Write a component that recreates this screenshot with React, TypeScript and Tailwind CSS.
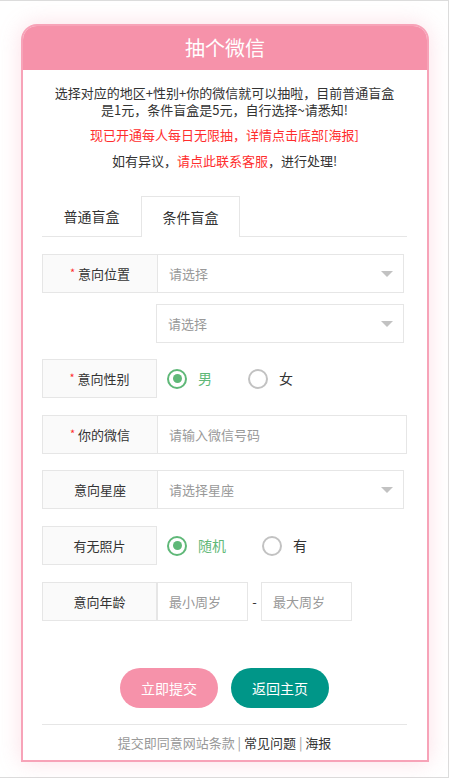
import React from "react";

const font = { fontFamily: '"Noto Sans CJK SC", "Noto Sans", sans-serif' };

function Label({ text, required, full }: { text: string; required?: boolean; full?: boolean }) {
  return (
    <div
      className={`w-[115px] h-[39px] shrink-0 flex items-center justify-center bg-[#fafafa] border border-[#e6e6e6] text-[13px] text-[#333] ${full ? "" : "border-r-0"}`}
    >
      {required && <span className="text-[#ff2d2d] text-[11px] mr-[3px] -mt-[3px]">*</span>}
      <span>{text}</span>
    </div>
  );
}

function Select({ text, width }: { text: string; width: string }) {
  return (
    <div className={`${width} h-[39px] border border-[#e6e6e6] bg-white flex items-center justify-between pl-[11px] pr-[10px] text-[13px] text-[#999]`}>
      <span>{text}</span>
      <span className="w-0 h-0 border-t-[6px] border-t-[#c2c2c2] border-x-[6px] border-x-transparent" />
    </div>
  );
}

function Radio({ text, checked }: { text: string; checked?: boolean }) {
  return (
    <div className="flex items-center mr-[36px]">
      <span
        className={`w-[20px] h-[20px] rounded-full border-[2px] flex items-center justify-center ${checked ? "border-[#5fb878]" : "border-[#c2c2c2]"}`}
      >
        {checked && <span className="w-[9px] h-[9px] rounded-full bg-[#5fb878]" />}
      </span>
      <span className={`ml-[11px] text-[14px] ${checked ? "text-[#5fb878]" : "text-[#333]"}`}>{text}</span>
    </div>
  );
}

export default function App() {
  return (
    <div style={font} className="w-[449px] h-[778px] border-t border-r border-b border-[#dcdcdc] bg-white pl-[21px] pt-[23px]">
      <div className="w-[408px] h-[738px] border-2 border-[#f7a3b8] rounded-t-[16px] bg-white shadow-[0_0_22px_rgba(245,140,166,0.28)] flex flex-col">
        <div className="h-[44px] bg-[#f692aa] rounded-t-[14px] flex items-center justify-center text-white text-[20px]">
          抽个微信
        </div>
        <div className="pl-[19px] pr-[20px] flex flex-col flex-1">
          <div className="pt-[14px] text-[13px] leading-[17px] text-[#333] text-center">
            <p className="w-[347px] mx-auto">选择对应的地区+性别+你的微信就可以抽啦，目前普通盲盒是1元，条件盲盒是5元，自行选择~请悉知!</p>
            <p className="mt-[8px] text-[#ff2d2d]">现已开通每人每日无限抽，详情点击底部[海报]</p>
            <p className="mt-[9px]">
              如有异议，<span className="text-[#ff2d2d]">请点此联系客服</span>，进行处理!
            </p>
          </div>

          <div className="mt-[27px] flex border-b border-[#e6e6e6] h-[41px]">
            <div className="w-[99px] h-[40px] flex items-center justify-center text-[14px] text-[#333]">普通盲盒</div>
            <div className="w-[99px] h-[41px] flex items-center justify-center text-[14px] text-[#333] bg-white border border-b-0 border-[#e6e6e6] -mb-px">
              条件盲盒
            </div>
          </div>

          <div className="mt-[17px] flex">
            <Label text="意向位置" required />
            <Select text="请选择" width="w-[247px]" />
          </div>
          <div className="mt-[11px] flex pl-[114px]">
            <Select text="请选择" width="w-[248px]" />
          </div>

          <div className="mt-[16px] flex items-center">
            <Label text="意向性别" required full />
            <div className="flex items-center pl-[10px]">
              <Radio text="男" checked />
              <Radio text="女" />
            </div>
          </div>

          <div className="mt-[17px] flex">
            <Label text="你的微信" required />
            <div className="w-[250px] h-[39px] border border-[#e6e6e6] flex items-center pl-[11px] text-[13px] text-[#999]">
              请输入微信号码
            </div>
          </div>

          <div className="mt-[16px] flex">
            <Label text="意向星座" />
            <Select text="请选择星座" width="w-[247px]" />
          </div>

          <div className="mt-[17px] flex items-center">
            <Label text="有无照片" full />
            <div className="flex items-center pl-[10px]">
              <Radio text="随机" checked />
              <Radio text="有" />
            </div>
          </div>

          <div className="mt-[17px] flex items-center">
            <Label text="意向年龄" full />
            <div className="w-[91px] h-[39px] border border-[#e6e6e6] flex items-center pl-[11px] text-[13px] text-[#999]">最小周岁</div>
            <span className="w-[13px] text-center text-[13px] text-[#333]">-</span>
            <div className="w-[91px] h-[39px] border border-[#e6e6e6] flex items-center pl-[11px] text-[13px] text-[#999]">最大周岁</div>
          </div>

          <div className="mt-[47px] flex justify-center gap-[13px]">
            <button className="w-[98px] h-[40px] rounded-full bg-[#f692aa] text-white text-[14px]">立即提交</button>
            <button className="w-[98px] h-[40px] rounded-full bg-[#009688] text-white text-[14px]">返回主页</button>
          </div>

          <div className="mt-[16px] border-t border-[#e6e6e6] pt-[9px] text-center text-[13px] leading-[18px]">
            <span className="text-[#999]">提交即同意网站条款</span>
            <span className="text-[#999]"> | </span>
            <span className="text-[#333]">常见问题</span>
            <span className="text-[#999]"> | </span>
            <span className="text-[#333]">海报</span>
          </div>
        </div>
      </div>
    </div>
  );
}
